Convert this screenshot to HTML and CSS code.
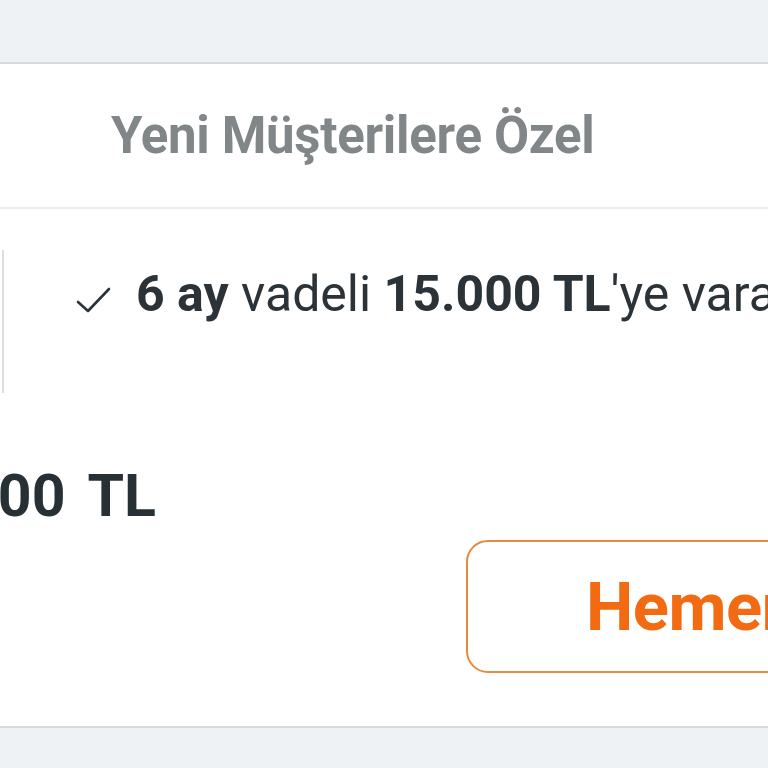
FILE: index.html
```html
<!DOCTYPE html>
<html lang="tr">
<head>
<meta charset="utf-8">
<link rel="stylesheet" href="styles.css">
</head>
<body>
<div class="page">
  <div class="card">
    <div class="card-head">
      <h2 class="title">Yeni Müşterilere Özel</h2>
    </div>
    <div class="card-body">
      <div class="feature-row">
        <div class="thumb"></div>
        <ul class="features">
          <li class="feature">
            <svg class="check" viewBox="0 0 36 28" width="36" height="28"><path d="M2 16 L12 25 L33 3" fill="none" stroke="#2b3338" stroke-width="2.6" stroke-linecap="round" stroke-linejoin="round"/></svg>
            <span class="feature-text"><b>6 ay</b> vadeli <b>15.000 TL</b>'ye varan kredi</span>
          </li>
        </ul>
      </div>
      <div class="price-row">
        <div class="price"><span class="amount">15.000</span><span class="currency">TL</span></div>
      </div>
      <div class="action-row">
        <button class="cta">Hemen Başvur</button>
      </div>
    </div>
  </div>
</div>
</body>
</html>
```

FILE: styles.css
```css
html, body {
  margin: 0;
  padding: 0;
  background: #eef2f5;
  overflow: hidden;
  width: 768px;
  height: 768px;
}
.page {
  padding-top: 62px;
  font-family: Roboto, "Liberation Sans", sans-serif;
}
.card {
  width: 1000px;
  background: #ffffff;
  border-top: 2px solid #d7dbde;
  border-bottom: 2px solid #d7dbde;
}
.card-head {
  height: 145px;
  display: flex;
  align-items: center;
  padding-left: 111px;
  border-bottom: 2px solid #ececec;
  box-sizing: border-box;
}
.title {
  margin: 0;
  font-size: 51px;
  font-weight: 700;
  color: #818689;
  letter-spacing: -0.3px;
}
.card-body {
  padding-top: 41px;
  padding-bottom: 53px;
}
.feature-row {
  display: flex;
  align-items: flex-start;
}
.thumb {
  width: 100px;
  margin-left: -98px;
  height: 143px;
  border-right: 2px solid #dedede;
  flex: none;
}
.features {
  list-style: none;
  margin: 0;
  padding: 0 0 0 72px;
}
.feature {
  display: flex;
  align-items: center;
  gap: 24px;
  margin-top: 15px;
  white-space: nowrap;
}
.check {
  flex: none;
  margin-top: 12px;
}
.feature-text {
  font-size: 50px;
  color: #2b3338;
}
.feature-text b {
  font-weight: 700;
}
.price-row {
  display: flex;
  justify-content: flex-end;
  width: 156px;
  margin-top: 68px;
}
.price {
  display: flex;
  gap: 22px;
  font-size: 59px;
  font-weight: 700;
  color: #263035;
  white-space: nowrap;
}
.action-row {
  padding-left: 466px;
  margin-top: 10px;
}
.cta {
  display: block;
  box-sizing: border-box;
  width: 520px;
  height: 133px;
  border: 2px solid #e8893f;
  border-radius: 22px;
  background: #ffffff;
  color: #f26b12;
  font-family: Roboto, "Liberation Sans", sans-serif;
  font-size: 67px;
  font-weight: 700;
  letter-spacing: -0.5px;
  text-align: left;
  padding: 0 0 0 118px;
  white-space: nowrap;
}
```
